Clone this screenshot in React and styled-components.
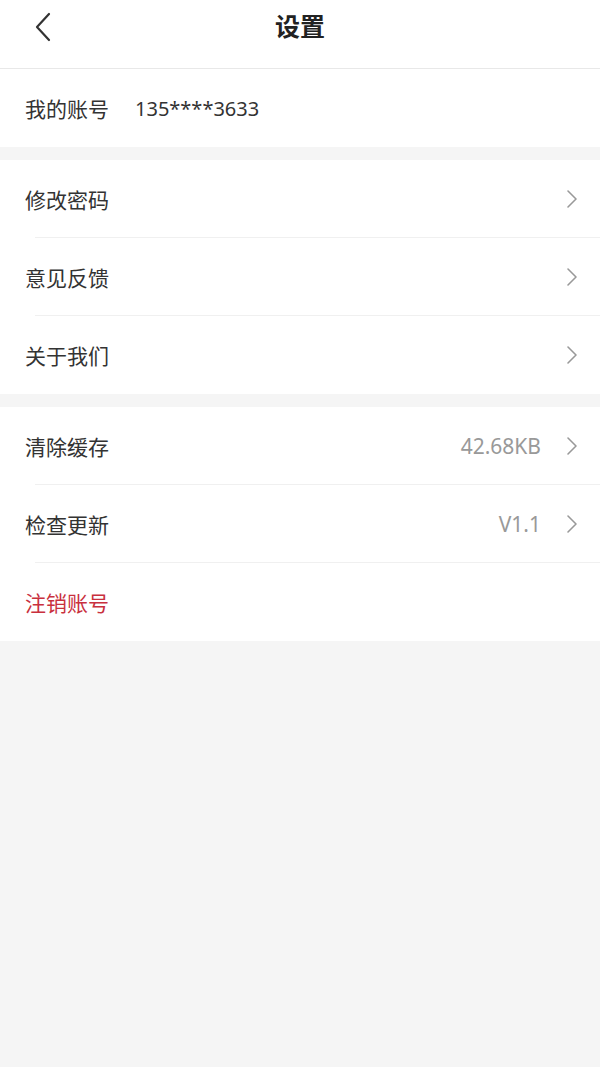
import styled, { createGlobalStyle } from "styled-components"

const GlobalStyle = createGlobalStyle`
  html, body {
    margin: 0;
    padding: 0;
    background: #f5f5f5;
    font-family: "Noto Sans CJK SC", "Noto Sans", sans-serif;
  }
  #root {
    min-height: 1067px;
  }
`

const Page = styled.div`
  width: 600px;
  min-height: 1067px;
  background: #f5f5f5;
`

const Header = styled.div`
  height: 68px;
  background: #fff;
  border-bottom: 1px solid #e8e8e8;
  display: grid;
  grid-template-columns: 80px 1fr 80px;
  align-items: center;
`

const BackButton = styled.div`
  display: flex;
  align-items: center;
  padding-left: 35px;
  padding-bottom: 14px;
  height: 100%;
  box-sizing: border-box;
  color: #333;
`

const Title = styled.h1`
  margin: 0;
  text-align: center;
  font-size: 25px;
  font-weight: 700;
  color: #222;
  padding-bottom: 18px;
  line-height: 1;
`

const Group = styled.div`
  background: #fff;
  margin-bottom: ${(p) => (p.$last ? "0" : "13px")};
`

const Row = styled.div`
  height: 78px;
  display: flex;
  align-items: center;
  padding: 0 22px 0 25px;
  position: relative;
  box-sizing: border-box;
  ${(p) =>
    p.$divider &&
    `
    &::after {
      content: "";
      position: absolute;
      left: 35px;
      right: 0;
      bottom: 0;
      height: 1px;
      background: #f0f0f0;
    }
  `}
`

const Label = styled.span`
  font-size: 21px;
  color: ${(p) => (p.$danger ? "#c9303e" : "#333")};
`

const AccountValue = styled.span`
  font-family: "Noto Sans", sans-serif;
  font-size: 20px;
  color: #333;
  margin-left: 26px;
`

const Value = styled.span`
  margin-left: auto;
  font-family: "Noto Sans", sans-serif;
  font-size: 21px;
  color: #999;
  margin-right: 25px;
`

const Arrow = styled.svg`
  margin-left: ${(p) => (p.$auto ? "auto" : "0")};
  flex-shrink: 0;
`

const Chevron = ({ auto }) => (
  <Arrow $auto={auto} width="12" height="20" viewBox="0 0 12 20">
    <path d="M2 2 L10 10 L2 18" fill="none" stroke="#999" strokeWidth="1.6" strokeLinecap="round" strokeLinejoin="round" />
  </Arrow>
)

export default function App() {
  return (
    <>
      <GlobalStyle />
      <Page>
        <Header>
          <BackButton>
            <svg width="17" height="30" viewBox="0 0 17 30">
              <path d="M14 2 L2 15 L14 28" fill="none" stroke="#333" strokeWidth="2.2" strokeLinecap="round" strokeLinejoin="round" />
            </svg>
          </BackButton>
          <Title>设置</Title>
          <div />
        </Header>

        <Group>
          <Row>
            <Label>我的账号</Label>
            <AccountValue>135****3633</AccountValue>
          </Row>
        </Group>

        <Group>
          <Row $divider>
            <Label>修改密码</Label>
            <Chevron auto />
          </Row>
          <Row $divider>
            <Label>意见反馈</Label>
            <Chevron auto />
          </Row>
          <Row>
            <Label>关于我们</Label>
            <Chevron auto />
          </Row>
        </Group>

        <Group $last>
          <Row $divider>
            <Label>清除缓存</Label>
            <Value>42.68KB</Value>
            <Chevron />
          </Row>
          <Row $divider>
            <Label>检查更新</Label>
            <Value>V1.1</Value>
            <Chevron />
          </Row>
          <Row>
            <Label $danger>注销账号</Label>
          </Row>
        </Group>
      </Page>
    </>
  )
}
